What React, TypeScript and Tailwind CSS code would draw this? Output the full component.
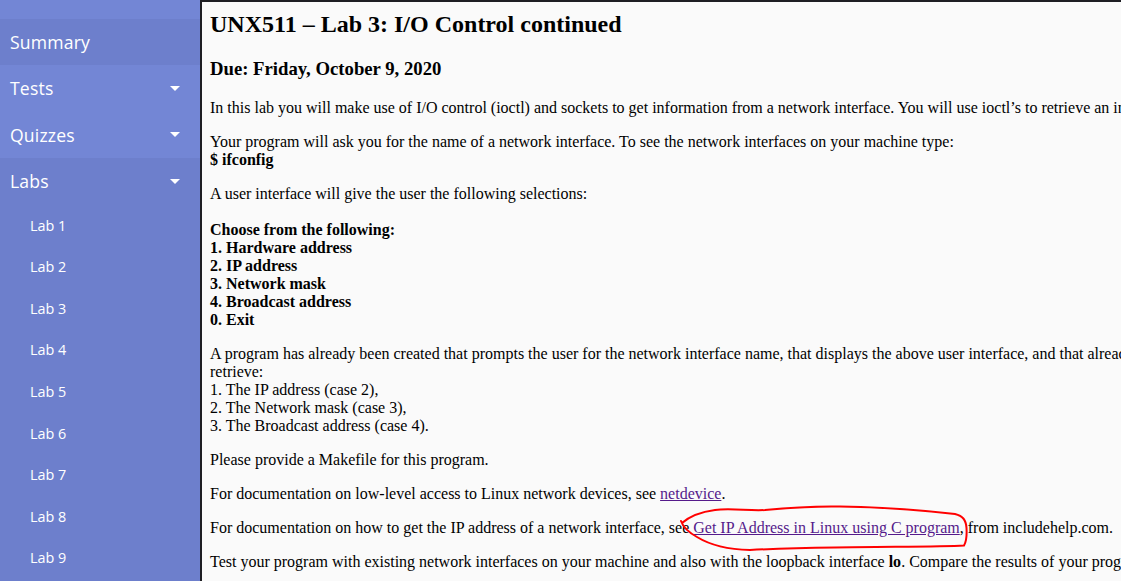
import React from "react";

const labs = ["Lab 1", "Lab 2", "Lab 3", "Lab 4", "Lab 5", "Lab 6", "Lab 7", "Lab 8", "Lab 9", "Lab 10"];

function Caret() {
  return <span className="w-0 h-0 border-l-[5px] border-r-[5px] border-t-[5px] border-l-transparent border-r-transparent border-t-white" />;
}

function NavItem({ label, active, caret }: { label: string; active?: boolean; caret?: boolean }) {
  return (
    <div
      className={`flex items-center justify-between pl-[10px] pr-[20px] py-[10px] text-[17.6px] leading-[1.5] tracking-[0.01em] text-white ${
        active ? "bg-[#6d7fcc]" : "bg-[#7386d5]"
      }`}
    >
      <span>{label}</span>
      {caret && <Caret />}
    </div>
  );
}

export default function App() {
  return (
    <div className="relative flex h-screen w-screen overflow-hidden bg-[#fafafa]">
      {/* Sidebar */}
      <aside className="w-[200px] shrink-0 flex flex-col bg-[#6d7fcc] font-['Open_Sans',sans-serif]">
        <div className="h-[19px] shrink-0 bg-[#7386d5]" />
        <NavItem label="Summary" active />
        <NavItem label="Tests" caret />
        <NavItem label="Quizzes" caret />
        <NavItem label="Labs" active caret />
        {labs.map((l) => (
          <div key={l} className="pl-[30px] py-[10px] text-[14.4px] leading-[1.5] text-white bg-[#6d7fcc]">
            {l}
          </div>
        ))}
      </aside>

      {/* Lab content */}
      <main className="flex-1 min-w-0 overflow-hidden border-l-2 border-t-2 border-[#1e1e23] bg-[#fafafa] pl-2 pt-[9px] font-['Liberation_Serif',serif] text-[16px] leading-[normal] text-black">
        <div className="w-[1400px]">
          <h2 className="text-[24px] font-bold mb-[20px]">UNX511 – Lab 3: I/O Control continued</h2>
          <h3 className="text-[18.72px] font-bold mb-[18.72px]">Due: Friday, October 9, 2020</h3>
          <p className="mb-4 whitespace-nowrap">
            In this lab you will make use of I/O control (ioctl) and sockets to get information from a network interface. You will use ioctl’s to retrieve an interface’s hardware address, IP address, network mask and broadcast address.
          </p>
          <p className="mb-4 whitespace-nowrap">
            Your program will ask you for the name of a network interface. To see the network interfaces on your machine type:
            <br />
            <b>$ ifconfig</b>
          </p>
          <p className="mb-[18px]">A user interface will give the user the following selections:</p>
          <p className="mb-4 font-bold">
            Choose from the following:
            <br />
            1. Hardware address
            <br />
            2. IP address
            <br />
            3. Network mask
            <br />
            4. Broadcast address
            <br />
            0. Exit
          </p>
          <p className="mb-4 whitespace-nowrap">
            A program has already been created that prompts the user for the network interface name, that displays the above user interface, and that already retrieves the hardware address. Your job is to
            <br />
            retrieve:
            <br />
            1. The IP address (case 2),
            <br />
            2. The Network mask (case 3),
            <br />
            3. The Broadcast address (case 4).
          </p>
          <p className="mb-4">Please provide a Makefile for this program.</p>
          <p className="mb-4">
            For documentation on low-level access to Linux network devices, see{" "}
            <a href="#" className="text-[#551a8b] underline">netdevice</a>.
          </p>
          <p className="mb-4 whitespace-nowrap">
            For documentation on how to get the IP address of a network interface, see{" "}
            <a href="#" className="text-[#551a8b] underline">Get IP Address in Linux using C program</a>, from includehelp.com.
          </p>
          <p className="mb-4 whitespace-nowrap">
            Test your program with existing network interfaces on your machine and also with the loopback interface <b>lo</b>. Compare the results of your program with the output of ifconfig.
          </p>
        </div>
      </main>

      {/* Hand-drawn red annotation */}
      <svg className="absolute left-0 top-0 pointer-events-none" width="1121" height="581" viewBox="0 0 1121 581">
        <path
          d="M 682 523 C 690 516, 700 512, 715 510 C 730 508, 750 511, 765 510 C 785 508, 810 506, 840 506.5 C 880 507, 920 510, 955 514 C 963 516, 966 520, 966.5 528 C 967 536, 966 542, 964 545.5 C 940 547, 880 546.5, 835 547.5 C 800 548, 770 549, 750 550 C 730 549.5, 710 545, 697 537 C 688 532, 683 527, 681 521"
          fill="none"
          stroke="#ff0000"
          strokeWidth="2"
          strokeLinecap="round"
        />
      </svg>
    </div>
  );
}
